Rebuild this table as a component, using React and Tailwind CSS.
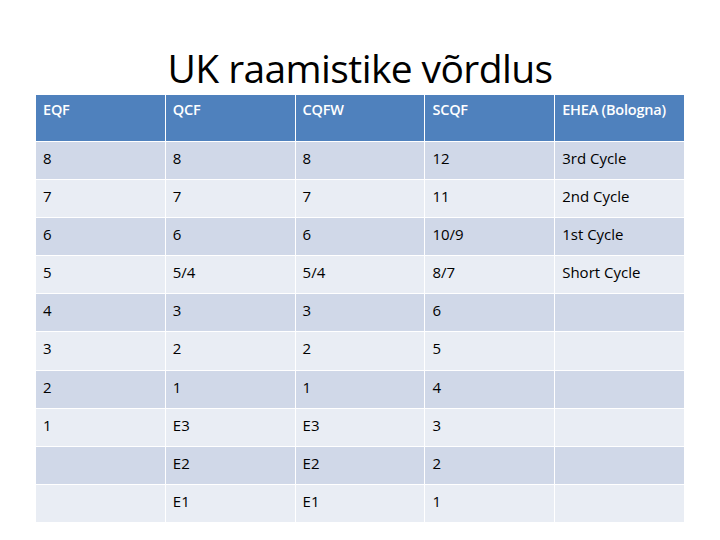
const headers = ["EQF", "QCF", "CQFW", "SCQF", "EHEA (Bologna)"];

const rows = [
  ["8", "8", "8", "12", "3rd Cycle"],
  ["7", "7", "7", "11", "2nd Cycle"],
  ["6", "6", "6", "10/9", "1st Cycle"],
  ["5", "5/4", "5/4", "8/7", "Short Cycle"],
  ["4", "3", "3", "6", ""],
  ["3", "2", "2", "5", ""],
  ["2", "1", "1", "4", ""],
  ["1", "E3", "E3", "3", ""],
  ["", "E2", "E2", "2", ""],
  ["", "E1", "E1", "1", ""],
];

export default function App() {
  return (
    <div
      className="w-[720px] h-[540px] bg-white flex flex-col items-center"
      style={{ fontFamily: '"Open Sans", "Liberation Sans", sans-serif' }}
    >
      <h1 className="mt-[40px] h-[55px] text-[39px] leading-[55px] text-black tracking-[-0.6px]">
        UK raamistike võrdlus
      </h1>

      <div className="w-[648px] grid grid-cols-5 gap-px bg-white">
        {headers.map((h) => (
          <div
            key={h}
            className="h-[46px] bg-[#4f81bd] text-white font-semibold text-[14.5px] leading-[20px] px-[7px] pt-[5px] tracking-[-0.2px]"
          >
            {h}
          </div>
        ))}

        {rows.map((row, i) =>
          row.map((cell, j) => (
            <div
              key={i + "-" + j}
              className={
                "h-[37.1px] text-black text-[15px] leading-[20px] px-[7px] pt-[6px] " +
                (i % 2 === 0 ? "bg-[#d0d8e8]" : "bg-[#e9edf4]")
              }
            >
              {cell}
            </div>
          ))
        )}
      </div>
    </div>
  );
}
